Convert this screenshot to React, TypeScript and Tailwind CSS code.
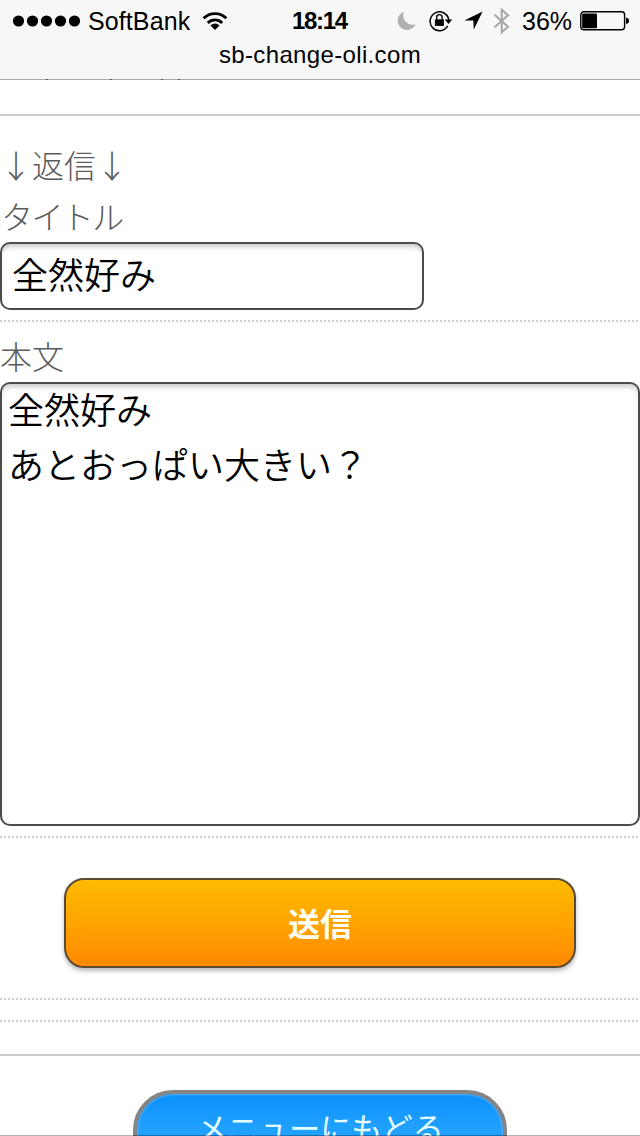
import React from "react";

const clippedMarks = [46, 110, 161, 178];

const SignalDots = () => (
  <svg width="68" height="12" viewBox="0 0 68 12">
    {[0, 1, 2, 3, 4].map((dot) => (
      <circle key={dot} cx={5.5 + dot * 14} cy="6" r="5.6" />
    ))}
  </svg>
);

const WifiIcon = () => (
  <svg width="26" height="20" viewBox="0 0 26 20" fill="none" stroke="#000" strokeWidth="2.9">
    <path d="M1.6 7.3a16.2 16.2 0 0 1 22.8 0" />
    <path d="M5.8 11.9a10.2 10.2 0 0 1 14.4 0" />
    <path d="M13 19l-4.5-4.5a6.3 6.3 0 0 1 9 0z" fill="#000" stroke="none" />
  </svg>
);

const MoonIcon = () => (
  <svg width="20" height="20" viewBox="0 0 20 20" fill="#b0b0b0">
    <path d="M7 .8A9.3 9.3 0 1 0 18.6 13.2 9.3 9.3 0 0 1 7 .8z" />
  </svg>
);

const RotationLockIcon = () => (
  <svg width="24" height="22" viewBox="0 0 24 22">
    <path d="M18.7 15.9A9.4 9.4 0 1 1 19.8 10" fill="none" stroke="#000" strokeWidth="1.5" />
    <path d="M15.8 9.6h7.4l-3.7 4.4z" />
    <path d="M5.9 9.3h9v6.6h-9z" />
    <path d="M7.7 9.6V7.3a2.7 2.7 0 0 1 5.4 0v2.3" fill="none" stroke="#000" strokeWidth="1.4" />
  </svg>
);

const LocationIcon = () => (
  <svg width="19" height="19" viewBox="0 0 19 19">
    <path d="M18.6.5L.3 9.4h9l.5 9.1z" />
  </svg>
);

const BluetoothIcon = () => (
  <svg width="18" height="28" viewBox="0 0 18 28" fill="none" stroke="#a6a6a6" strokeWidth="2">
    <path d="M1.5 7.7L15 19.7 8.7 25.3V2.7L15 8.3 1.5 20.3" />
  </svg>
);

const BatteryIcon = () => (
  <svg width="50" height="20" viewBox="0 0 50 20">
    <rect x=".8" y=".8" width="43.8" height="18" rx="3" fill="none" stroke="#000" strokeWidth="1.4" />
    <rect x="2.2" y="2.4" width="14.8" height="14.8" rx="1" />
    <path d="M46 6.5c2.2.4 3 1.6 3 3.3s-.8 2.9-3 3.3z" />
  </svg>
);

const StatusBar = () => (
  <header className="h-20 shrink-0 border-b border-[#a9a9a9] bg-[#f7f7f7] text-black">
    <div className="flex h-[41px] items-center pl-[13px]">
      <SignalDots />
      <span className="ml-[7px] w-[104px] pt-[2px] text-[25px] tracking-[0.1px]">SoftBank</span>
      <span className="ml-[10px]">
        <WifiIcon />
      </span>
      <span className="ml-[64px] w-[58px] text-[24px] font-bold tracking-[-1.3px]">18:14</span>
      <div className="ml-[47px] flex items-center">
        <MoonIcon />
        <span className="ml-[12px]">
          <RotationLockIcon />
        </span>
        <span className="ml-[11px]">
          <LocationIcon />
        </span>
        <span className="ml-[10px]">
          <BluetoothIcon />
        </span>
      </div>
      <span className="ml-[11px] w-[51px] pt-[2px] text-[25px]">36%</span>
      <span className="ml-[7px]">
        <BatteryIcon />
      </span>
    </div>
    <p className="text-center text-[24px] leading-[28px] tracking-[0.35px]">sb-change-oli.com</p>
  </header>
);

const DottedLine = () => (
  <div className="h-[2px] w-full shrink-0 bg-[repeating-linear-gradient(90deg,#cbcbcb_0_2px,transparent_2px_4px)]" />
);

const SolidLine = () => <div className="h-[2px] w-full shrink-0 bg-[#cbcbcb]" />;

const labelText = "font-['Noto_Sans_CJK_JP',serif] font-light text-[#5c5c5c] text-[32px]";

const App = () => {
  return (
    <div className="relative flex h-[1136px] w-[640px] flex-col overflow-hidden bg-white font-['Liberation_Sans','Noto_Sans_CJK_JP',sans-serif]">
      <StatusBar />
      <svg className="absolute top-[79px] left-0" width="300" height="1">
        {clippedMarks.map((x) => (
          <rect key={x} x={x} width="2" height="1" fill="#555" />
        ))}
      </svg>
      <div className="mt-[34px]">
        <SolidLine />
      </div>

      <form className="flex shrink-0 flex-col" onSubmit={(e) => e.preventDefault()}>
        <p className={`mt-[24px] h-[52px] leading-[48px] ${labelText}`}>↓返信↓</p>
        <label htmlFor="title" className={`h-[50px] pl-px leading-[47px] tracking-[-1.6px] ${labelText}`}>
          タイトル
        </label>
        <input
          id="title"
          defaultValue="全然好み"
          className="h-[68px] w-[424px] rounded-[10px] border-2 border-[#4c4c4c] px-[10px] pb-[7px] text-[36px] font-[350] text-black shadow-[inset_0_5px_5px_-2px_#cccccc] outline-none"
        />
        <div className="mt-[10px]">
          <DottedLine />
        </div>

        <label htmlFor="body" className={`mt-[10px] h-[50px] leading-[47px] ${labelText}`}>
          本文
        </label>
        <textarea
          id="body"
          defaultValue={"全然好み\nあとおっぱい大きい？"}
          className="block h-[444px] w-full resize-none rounded-[10px] border-2 border-[#4c4c4c] px-[6px] text-[36px] leading-[55px] font-[350] text-black shadow-[inset_0_5px_5px_-2px_#cccccc] outline-none"
        />
        <div className="mt-[10px]">
          <DottedLine />
        </div>

        <button
          type="submit"
          className="mx-auto mt-[40px] h-[90px] w-[512px] rounded-[20px] border-2 border-[#584a35] bg-linear-to-b from-[#ffbb00] to-[#ff8a00] pt-[3px] text-[32px] font-bold text-[#fffff5] shadow-[0_3px_4px_#bbbbbb]"
        >
          送信
        </button>
      </form>

      <div className="mt-[30px]">
        <DottedLine />
      </div>
      <div className="mt-[20px]">
        <DottedLine />
      </div>
      <div className="mt-[32px]">
        <SolidLine />
      </div>

      <button
        type="button"
        className="mx-auto mt-[34px] h-[90px] w-[374px] shrink-0 rounded-[40px] border-4 border-[#858585] bg-linear-to-b from-[#0890fb] to-[#20a0ff] to-40% pb-[9px] text-[31px] text-[#e5ffff] shadow-[inset_0_0_2px_1px_#55b2f5]"
      >
        メニューにもどる
      </button>
      <div className="absolute bottom-0 left-0 h-px w-full bg-black/30" />
    </div>
  );
};

export default App;
